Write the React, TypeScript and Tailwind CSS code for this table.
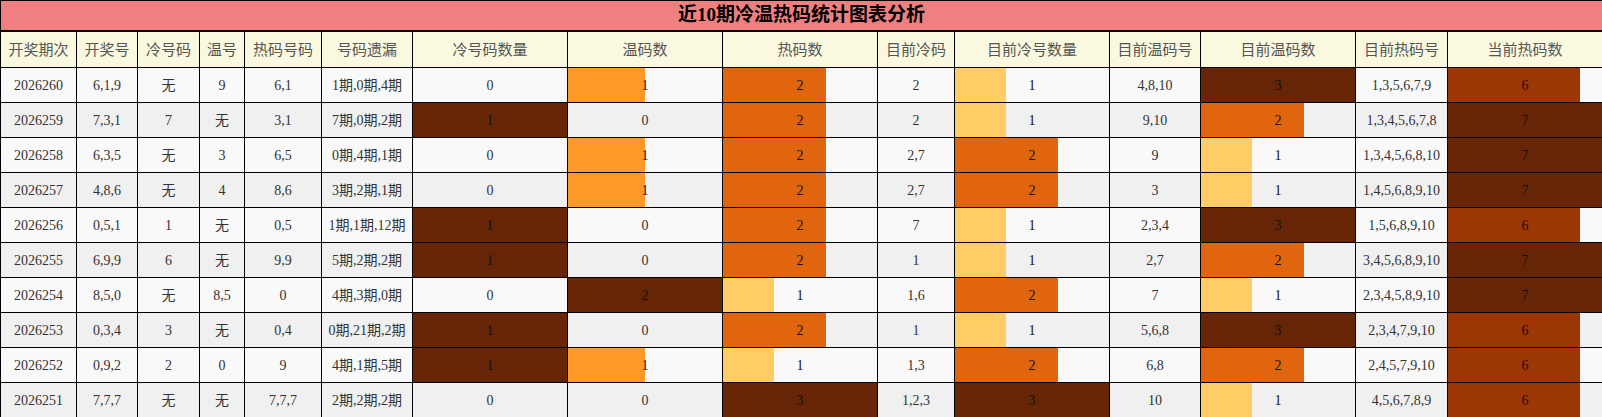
import React from "react";

type Row = {
  no: string;
  draw: string;
  cold: string;
  warm: string;
  hot: string;
  miss: string;
  coldCnt: number;
  warmCnt: number;
  hotCnt: number;
  curCold: string;
  curColdCnt: number;
  curWarm: string;
  curWarmCnt: number;
  curHot: string;
  curHotCnt: number;
};

const rows: Row[] = [
  { no: "2026260", draw: "6,1,9", cold: "无", warm: "9", hot: "6,1", miss: "1期,0期,4期", coldCnt: 0, warmCnt: 1, hotCnt: 2, curCold: "2", curColdCnt: 1, curWarm: "4,8,10", curWarmCnt: 3, curHot: "1,3,5,6,7,9", curHotCnt: 6 },
  { no: "2026259", draw: "7,3,1", cold: "7", warm: "无", hot: "3,1", miss: "7期,0期,2期", coldCnt: 1, warmCnt: 0, hotCnt: 2, curCold: "2", curColdCnt: 1, curWarm: "9,10", curWarmCnt: 2, curHot: "1,3,4,5,6,7,8", curHotCnt: 7 },
  { no: "2026258", draw: "6,3,5", cold: "无", warm: "3", hot: "6,5", miss: "0期,4期,1期", coldCnt: 0, warmCnt: 1, hotCnt: 2, curCold: "2,7", curColdCnt: 2, curWarm: "9", curWarmCnt: 1, curHot: "1,3,4,5,6,8,10", curHotCnt: 7 },
  { no: "2026257", draw: "4,8,6", cold: "无", warm: "4", hot: "8,6", miss: "3期,2期,1期", coldCnt: 0, warmCnt: 1, hotCnt: 2, curCold: "2,7", curColdCnt: 2, curWarm: "3", curWarmCnt: 1, curHot: "1,4,5,6,8,9,10", curHotCnt: 7 },
  { no: "2026256", draw: "0,5,1", cold: "1", warm: "无", hot: "0,5", miss: "1期,1期,12期", coldCnt: 1, warmCnt: 0, hotCnt: 2, curCold: "7", curColdCnt: 1, curWarm: "2,3,4", curWarmCnt: 3, curHot: "1,5,6,8,9,10", curHotCnt: 6 },
  { no: "2026255", draw: "6,9,9", cold: "6", warm: "无", hot: "9,9", miss: "5期,2期,2期", coldCnt: 1, warmCnt: 0, hotCnt: 2, curCold: "1", curColdCnt: 1, curWarm: "2,7", curWarmCnt: 2, curHot: "3,4,5,6,8,9,10", curHotCnt: 7 },
  { no: "2026254", draw: "8,5,0", cold: "无", warm: "8,5", hot: "0", miss: "4期,3期,0期", coldCnt: 0, warmCnt: 2, hotCnt: 1, curCold: "1,6", curColdCnt: 2, curWarm: "7", curWarmCnt: 1, curHot: "2,3,4,5,8,9,10", curHotCnt: 7 },
  { no: "2026253", draw: "0,3,4", cold: "3", warm: "无", hot: "0,4", miss: "0期,21期,2期", coldCnt: 1, warmCnt: 0, hotCnt: 2, curCold: "1", curColdCnt: 1, curWarm: "5,6,8", curWarmCnt: 3, curHot: "2,3,4,7,9,10", curHotCnt: 6 },
  { no: "2026252", draw: "0,9,2", cold: "2", warm: "0", hot: "9", miss: "4期,1期,5期", coldCnt: 1, warmCnt: 1, hotCnt: 1, curCold: "1,3", curColdCnt: 2, curWarm: "6,8", curWarmCnt: 2, curHot: "2,4,5,7,9,10", curHotCnt: 6 },
  { no: "2026251", draw: "7,7,7", cold: "无", warm: "无", hot: "7,7,7", miss: "2期,2期,2期", coldCnt: 0, warmCnt: 0, hotCnt: 3, curCold: "1,2,3", curColdCnt: 3, curWarm: "10", curWarmCnt: 1, curHot: "4,5,6,7,8,9", curHotCnt: 6 },
];

const headers = [
  "开奖期次", "开奖号", "冷号码", "温号", "热码号码", "号码遗漏", "冷号码数量", "温码数", "热码数",
  "目前冷码", "目前冷号数量", "目前温码号", "目前温码数", "目前热码号", "当前热码数",
];

const widths = [76, 61, 62, 45, 77, 91, 155, 155, 155, 77, 155, 91, 155, 92, 155];

function barColor(r: number): string {
  if (r >= 0.99) return "#662506";
  if (r >= 0.8) return "#9C3604";
  if (r >= 0.6) return "#E1650F";
  if (r >= 0.45) return "#FE9929";
  return "#FECD66";
}

const cellBase = "border border-black p-0 text-center align-middle";

function TextCell({ v }: { v: string }) {
  return <td className={cellBase}>{v}</td>;
}

function BarCell({ v, max }: { v: number; max: number }) {
  const r = v / max;
  return (
    <td className={cellBase}>
      <div className="grid h-[34px]">
        {v > 0 && (
          <div
            className="col-start-1 row-start-1 h-full"
            style={{ width: `${r * 100}%`, backgroundColor: barColor(r) }}
          />
        )}
        <span className={`col-start-1 row-start-1 self-center text-center ${v > 0 ? "text-[#111]" : ""}`}>{v}</span>
      </div>
    </td>
  );
}

export default function App() {
  return (
    <div className="w-[1602px] bg-white">
      <table
        className="w-[1602px] table-fixed border-collapse text-[14px] text-[#333]"
        style={{ fontFamily: '"Liberation Serif", "Noto Sans CJK SC", serif' }}
      >
        <colgroup>
          {widths.map((w, i) => (
            <col key={i} style={{ width: `${w}px` }} />
          ))}
        </colgroup>
        <tbody>
          <tr className="h-[29px]">
            <td
              colSpan={15}
              className="border border-b-2 border-black bg-[#F08080] p-0 text-center align-middle text-[19px] font-bold text-black"
            >
              近10期冷温热码统计图表分析
            </td>
          </tr>
          <tr className="h-[37px] bg-[#FAF9DF]">
            {headers.map((h) => (
              <td
                key={h}
                className="border border-black p-0 text-center align-middle text-[15px] text-[#555]"
                style={{ fontFamily: '"Noto Sans CJK SC", sans-serif' }}
              >
                {h}
              </td>
            ))}
          </tr>
          {rows.map((r, i) => (
            <tr key={r.no} className={`h-[35px] ${i % 2 === 0 ? "bg-[#F9F9F9]" : "bg-[#F0F0F0]"}`}>
              <TextCell v={r.no} />
              <TextCell v={r.draw} />
              <TextCell v={r.cold} />
              <TextCell v={r.warm} />
              <TextCell v={r.hot} />
              <TextCell v={r.miss} />
              <BarCell v={r.coldCnt} max={1} />
              <BarCell v={r.warmCnt} max={2} />
              <BarCell v={r.hotCnt} max={3} />
              <TextCell v={r.curCold} />
              <BarCell v={r.curColdCnt} max={3} />
              <TextCell v={r.curWarm} />
              <BarCell v={r.curWarmCnt} max={3} />
              <TextCell v={r.curHot} />
              <BarCell v={r.curHotCnt} max={7} />
            </tr>
          ))}
        </tbody>
      </table>
    </div>
  );
}
